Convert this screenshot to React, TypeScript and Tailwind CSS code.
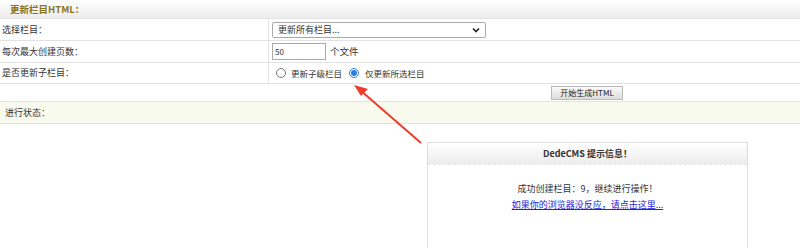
import React from "react";

export default function App() {
  const font = { fontFamily: '"Noto Sans CJK SC", "Liberation Sans", sans-serif' };
  return (
    <div className="relative w-[800px] h-[248px] bg-white overflow-hidden text-[9px] text-[#333]" style={font}>
      <div className="h-[19px] flex items-center pl-[10px] bg-gradient-to-b from-white to-[#ececec] border-b border-[#e3e3e3]">
        <span className="font-bold text-[#8b7420] text-[9.5px]">更新栏目HTML：</span>
      </div>
      <div className="flex h-[22px] border-b border-[#e2e2e2]">
        <div className="w-[269px] flex items-center pl-[2px] border-r border-[#e2e2e2]">选择栏目：</div>
        <div className="flex items-center pl-[3px]">
          <div className="w-[214px] h-[16px] border border-[#aaa] rounded-[2px] flex items-center justify-between px-[5px] bg-white">
            <span>更新所有栏目...</span>
            <svg width="8" height="6" viewBox="0 0 8 6"><path d="M1 1.5 L4 4.5 L7 1.5" stroke="#222" strokeWidth="1.6" fill="none" /></svg>
          </div>
        </div>
      </div>
      <div className="flex h-[22px] border-b border-[#e2e2e2]">
        <div className="w-[269px] flex items-center pl-[2px] border-r border-[#e2e2e2]">每次最大创建页数：</div>
        <div className="flex items-center pl-[3px] gap-[4px]">
          <div className="w-[54px] h-[17px] border border-[#aaa] flex items-center pl-[2px] text-[8px]">50</div>
          <span className="text-[9.5px]">个文件</span>
        </div>
      </div>
      <div className="flex h-[21px] border-b border-[#e2e2e2]">
        <div className="w-[269px] flex items-center pl-[2px] border-r border-[#e2e2e2]">是否更新子栏目：</div>
        <div className="flex items-center pl-[7px] text-[8.5px]">
          <span className="w-[10px] h-[10px] rounded-full border border-[#777] bg-white"></span>
          <span className="ml-[5px]">更新子级栏目</span>
          <span className="ml-[7px] w-[10px] h-[10px] rounded-full border border-[#2a7de1] bg-white flex items-center justify-center">
            <span className="w-[6px] h-[6px] rounded-full bg-[#2a7de1]"></span>
          </span>
          <span className="ml-[6px]">仅更新所选栏目</span>
        </div>
      </div>
      <div className="flex h-[18px] border-b border-[#e2e2e2] pl-[551px] items-center">
        <div className="w-[72px] h-[14px] border border-[#bbb] bg-gradient-to-b from-[#fafafa] to-[#dcdcdc] flex items-center justify-center text-[8px] text-[#222]">开始生成HTML</div>
      </div>
      <div className="h-[22px] bg-[#f9faee] border-b border-[#e2e2e2] flex items-center pl-[5px]">进行状态：</div>

      <div className="absolute left-[427px] top-[142px] w-[321px] h-[120px] border border-[#ddd] bg-white">
        <div className="h-[22px] bg-gradient-to-b from-white to-[#ececec] border-b border-dashed border-[#e6e6e6] flex items-center justify-center font-bold text-[9px] text-[#333]">DedeCMS 提示信息！</div>
        <div className="flex flex-col items-center pt-[16px] leading-[16px]">
          <span className="text-[9px]">成功创建栏目：9，继续进行操作！</span>
          <span className="text-[#2222dd] underline text-[9px]">如果你的浏览器没反应，请点击这里...</span>
        </div>
      </div>

      <svg className="absolute left-0 top-0" width="800" height="248">
        <line x1="421" y1="143" x2="360" y2="90" stroke="#ee3b2b" strokeWidth="2" />
        <polygon points="354,85 368,89 361,96" fill="#ee3b2b" />
      </svg>
    </div>
  );
}
